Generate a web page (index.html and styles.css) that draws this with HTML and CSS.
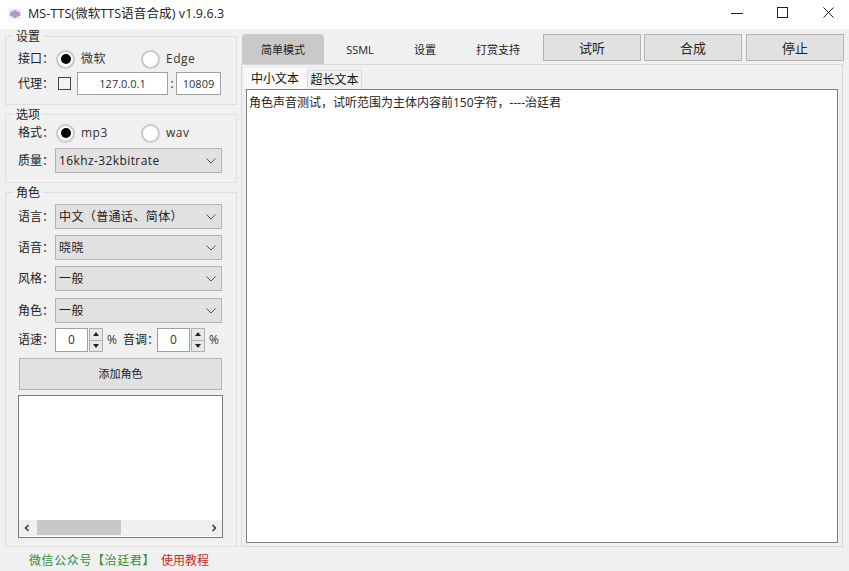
FILE: index.html
```html
<!DOCTYPE html>
<html lang="zh">
<head>
<meta charset="utf-8">
<title>MS-TTS</title>
<link rel="stylesheet" href="styles.css">
</head>
<body>
<div class="window">
  <header class="titlebar">
    <svg class="app-icon" width="12" height="12" viewBox="0 0 12 12"><rect x="0" y="1" width="12" height="10" fill="#efe6f5"/><path d="M2 4v4M4 3v6M6 2v8M8 3v6M10 4v4" stroke="#7b4fa8" stroke-width="1"/></svg>
    <span class="title-text">MS-TTS(微软TTS语音合成) v1.9.6.3</span>
    <div class="win-controls">
      <svg width="12" height="12" viewBox="0 0 12 12"><path d="M0 6.5h12" stroke="#222" stroke-width="1"/></svg>
      <svg width="12" height="12" viewBox="0 0 12 12"><rect x=".5" y=".5" width="10" height="10" fill="none" stroke="#222"/></svg>
      <svg width="12" height="12" viewBox="0 0 12 12"><path d="M.5.5l10 10M10.5.5l-10 10" stroke="#222"/></svg>
    </div>
  </header>

  <main class="main">
    <aside class="left">
      <section class="group group-a">
        <div class="group-title">设置</div>
        <div class="row row-radio">
          <span class="label">接口：</span>
          <span class="radio on"></span><span class="radio-text">微软</span>
          <span class="radio second"></span><span class="radio-text">Edge</span>
        </div>
        <div class="row row-proxy">
          <span class="label">代理：</span>
          <span class="check"></span>
          <span class="field field-ip">127.0.0.1</span>
          <span class="colon">:</span>
          <span class="field field-port">10809</span>
        </div>
      </section>

      <section class="group group-b">
        <div class="group-title">选项</div>
        <div class="row row-radio2">
          <span class="label">格式：</span>
          <span class="radio on"></span><span class="radio-text">mp3</span>
          <span class="radio second"></span><span class="radio-text">wav</span>
        </div>
        <div class="row row-q">
          <span class="label">质量：</span>
          <div class="combo"><span>16khz-32kbitrate</span><svg width="10" height="6" viewBox="0 0 10 6"><path d="M.5.5L5 5 9.5.5" fill="none" stroke="#555"/></svg></div>
        </div>
      </section>

      <section class="group group-c">
        <div class="group-title">角色</div>
        <div class="row row-c1">
          <span class="label">语言：</span>
          <div class="combo"><span>中文（普通话、简体）</span><svg width="10" height="6" viewBox="0 0 10 6"><path d="M.5.5L5 5 9.5.5" fill="none" stroke="#555"/></svg></div>
        </div>
        <div class="row row-c2">
          <span class="label">语音：</span>
          <div class="combo"><span>晓晓</span><svg width="10" height="6" viewBox="0 0 10 6"><path d="M.5.5L5 5 9.5.5" fill="none" stroke="#555"/></svg></div>
        </div>
        <div class="row row-c2">
          <span class="label">风格：</span>
          <div class="combo"><span>一般</span><svg width="10" height="6" viewBox="0 0 10 6"><path d="M.5.5L5 5 9.5.5" fill="none" stroke="#555"/></svg></div>
        </div>
        <div class="row row-c3">
          <span class="label">角色：</span>
          <div class="combo"><span>一般</span><svg width="10" height="6" viewBox="0 0 10 6"><path d="M.5.5L5 5 9.5.5" fill="none" stroke="#555"/></svg></div>
        </div>
        <div class="row row-spin">
          <span class="label">语速：</span>
          <span class="field field-spin">0</span>
          <div class="spin"><span class="up"></span><span class="down"></span></div>
          <span class="pct">%</span>
          <span class="label label-pitch">音调：</span>
          <span class="field field-spin">0</span>
          <div class="spin"><span class="up"></span><span class="down"></span></div>
          <span class="pct">%</span>
        </div>
        <button class="btn btn-add">添加角色</button>
        <div class="listbox">
          <div class="list-body"></div>
          <div class="hscroll">
            <svg width="8" height="8" viewBox="0 0 8 8"><path d="M5.5 1L2.5 4l3 3" fill="none" stroke="#333" stroke-width="1.5"/></svg>
            <div class="track"><div class="thumb"></div></div>
            <svg width="8" height="8" viewBox="0 0 8 8"><path d="M2.5 1l3 3-3 3" fill="none" stroke="#333" stroke-width="1.5"/></svg>
          </div>
        </div>
      </section>
    </aside>

    <section class="right">
      <div class="top-row">
        <nav class="tabs">
          <span class="tab active">简单模式</span>
          <span class="tab t-ssml">SSML</span>
          <span class="tab t-set">设置</span>
          <span class="tab t-pay">打赏支持</span>
        </nav>
        <div class="actions">
          <button class="btn btn-act">试听</button>
          <button class="btn btn-act">合成</button>
          <button class="btn btn-act">停止</button>
        </div>
      </div>
      <div class="pane">
        <div class="subtabs">
          <span class="subtab current">中小文本</span>
          <span class="subtab">超长文本</span>
        </div>
        <div class="editor">角色声音测试，试听范围为主体内容前150字符，----治廷君</div>
      </div>
    </section>
  </main>

  <footer class="status">
    <span class="link-green">微信公众号【治廷君】</span>
    <span class="link-red">使用教程</span>
  </footer>
</div>
</body>
</html>
```
FILE: styles.css
```css
* { box-sizing: border-box; }
html, body { margin: 0; padding: 0; }
body {
  width: 849px;
  height: 571px;
  overflow: hidden;
  background: #f0f0f0;
  color: #1c1c1c;
  font: 12px/16px "Open Sans", "Noto Sans CJK SC", sans-serif;
}
.window { display: flex; flex-direction: column; height: 571px; }

.titlebar {
  height: 29px;
  background: #fff;
  display: flex;
  align-items: center;
  padding-left: 9px;
  flex: none;
}
.app-icon { flex: none; margin-bottom: 2px; }
.title-text { margin-left: 7px; font-size: 12.5px; color: #222; margin-bottom: 2px; white-space: nowrap; letter-spacing: .1px; }
.win-controls {
  margin-left: auto;
  display: flex;
  gap: 34px;
  padding-right: 14px;
  margin-bottom: 4px;
}

.main { display: flex; height: 518px; padding: 5px 0 0 5px; flex: none; }
.left { width: 232px; flex: none; padding-top: 2px; }

.group { border: 1px solid #dfdfdf; background: #f0f0f0; padding-left: 12px; }
.group-a { height: 69px; }
.group-b { height: 69px; margin-top: 9px; }
.group-c { height: 355px; margin-top: 9px; }
.group-title {
  margin: -8px 0 0 -5px;
  height: 16px;
  width: 30px;
  background: #f0f0f0;
  text-align: center;
  font-size: 12px;
  color: #222;
}

.row { display: flex; align-items: center; }
.label { width: 37px; flex: none; white-space: nowrap; color: #222; }
.row-radio { height: 20px; margin-top: 4px; }
.row-proxy { height: 23px; margin-top: 3px; }
.row-radio2 { height: 20px; margin-top: 0; }
.row-q { height: 25px; margin-top: 5px; }
.row-c1 { height: 25px; margin-top: 3px; }
.row-c2 { height: 25px; margin-top: 6px; }
.row-c3 { height: 25px; margin-top: 7px; }
.row-spin { height: 24px; margin-top: 5px; }

.radio {
  width: 19px; height: 19px;
  flex: none;
  border: 2px solid #c9c9c9;
  border-radius: 50%;
  background: #fff;
  margin-left: 1px;
  display: flex;
  align-items: center;
  justify-content: center;
}
.radio.on::after { content: ""; width: 10px; height: 10px; border-radius: 50%; background: #000; }
.radio.second { margin-left: 36px; }
.radio-text { margin-left: 6px; width: 24px; white-space: nowrap; letter-spacing: .5px; color: #333; }

.check { width: 13px; height: 13px; border: 1px solid #444; background: #f4f4f4; margin-left: 3px; flex: none; }
.field {
  display: flex; align-items: center; justify-content: center;
  background: #fff;
  border: 1px solid #a0a0a0;
  height: 100%;
  flex: none;
  color: #333;
  font-size: 11px;
}
.field-ip { width: 91px; margin-left: 6px; }
.colon { width: 8px; text-align: center; flex: none; }
.field-port { width: 45px; }
.field-spin { width: 33px; font-size: 12px; }

.combo {
  width: 167px;
  height: 25px;
  flex: none;
  display: flex;
  align-items: center;
  justify-content: space-between;
  padding: 0 5px 0 3px;
  background: #e1e1e1;
  border: 1px solid #b4b4b4;
  color: #222;
  letter-spacing: .4px;
}
.combo span { white-space: nowrap; }

.spin {
  width: 14px;
  height: 24px;
  margin-left: 1px;
  flex: none;
  display: flex;
  flex-direction: column;
  border: 1px solid #b0b0b0;
  background: #e6e6e6;
}
.spin span { flex: 1; display: flex; align-items: center; justify-content: center; }
.spin .down { border-top: 1px solid #b0b0b0; }
.spin .up::after { content: ""; border: 3px solid transparent; border-top: 0; border-bottom: 4px solid #222; }
.spin .down::after { content: ""; border: 3px solid transparent; border-bottom: 0; border-top: 4px solid #222; }
.pct { margin-left: 4px; width: 11px; flex: none; color: #333; }
.label-pitch { margin-left: 5px; width: 34px; }

.btn {
  font: inherit;
  padding: 0;
  background: #e1e1e1;
  border: 1px solid #b4b4b4;
  color: #222;
}
.btn-add {
  display: block;
  width: 203px;
  height: 32px;
  margin: 6px 0 0 1px;
  font-size: 11px;
}
.listbox {
  width: 205px;
  height: 143px;
  margin-top: 5px;
  border: 1px solid #7a7a7a;
  background: #fff;
  display: flex;
  flex-direction: column;
}
.list-body { flex: 1; }
.hscroll {
  height: 16px;
  margin: 0 0 1px;
  display: flex;
  align-items: center;
  justify-content: space-between;
  padding: 0 4px;
  background: #f0f0f0;
}
.track { flex: 1; height: 16px; margin: 0 6px; }
.thumb { width: 84px; height: 15px; background: #c8c8c8; }

.right { margin-left: 4px; width: 603px; flex: none; display: flex; flex-direction: column; }
.top-row { height: 30px; display: flex; flex: none; }
.tabs { display: flex; width: 302px; flex: none; align-items: stretch; }
.tab { display: flex; align-items: center; justify-content: center; font-size: 11px; color: #222; padding-top: 2px; }
.tab.active {
  width: 82px;
  margin-left: 1px;
  background: #c9c9c9;
  border-radius: 4px 4px 0 0;
}
.t-ssml { width: 72px; }
.t-set { width: 58px; }
.t-pay { width: 88px; }
.actions { display: flex; gap: 4px; height: 27px; }
.btn-act { width: 98px; font-size: 13px; }
.actions .btn-act:nth-child(2) { margin-left: -1px; }

.pane {
  width: 602px;
  height: 483px;
  border: 1px solid #d9d9d9;
  padding: 1px 4px 0 4px;
  display: flex;
  flex-direction: column;
}
.subtabs { display: flex; height: 23px; flex: none; margin-left: -2px; align-items: flex-end; }
.subtab {
  width: 55px;
  height: 19px;
  margin-left: 1px;
  display: flex;
  align-items: center;
  justify-content: center;
  background: #f0f0f0;
  border: 1px solid #dcdcdc;
  border-bottom: 0;
  color: #111;
}
.subtab.current { width: 62px; height: 21px; margin-left: 0; background: #fafafa; border: 0; }
.editor {
  width: 592px;
  height: 454px;
  margin-left: 0;
  border: 1px solid #808080;
  background: #fff;
  padding: 5px 2px;
  color: #222;
  white-space: nowrap;
}

.status { flex: 1; display: flex; align-items: center; padding: 3px 0 0 29px; font-size: 12px; }
.link-green { color: #2f8f35; letter-spacing: .6px; }
.link-red { color: #cf2a2a; margin-left: 6px; }
```
